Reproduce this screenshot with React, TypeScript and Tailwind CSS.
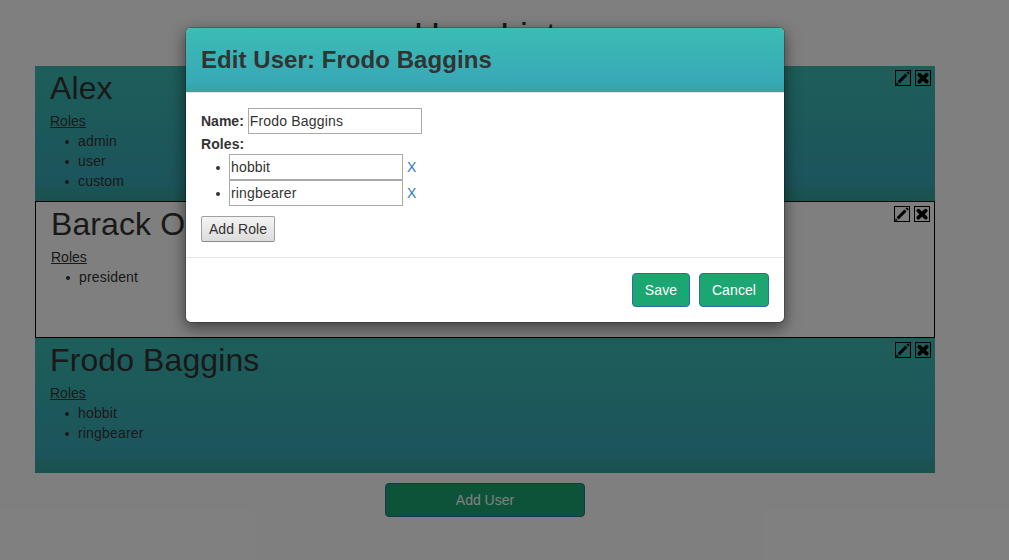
import { useState } from "react";

type User = { name: string; roles: string[]; outlined?: boolean };

const users: User[] = [
  { name: "Alex", roles: ["admin", "user", "custom"] },
  { name: "Barack Obama", roles: ["president"], outlined: true },
  { name: "Frodo Baggins", roles: ["hobbit", "ringbearer"] },
];

function PencilIcon() {
  return (
    <svg viewBox="0 0 16 16" className="block size-4" aria-label="Edit">
      <rect x=".5" y=".5" width="15" height="15" fill="none" stroke="#000" />
      <path d="M1 15 1.8 12.2 3.8 14.2Z" fill="#000" />
      <path d="M2.6 11.3 10.4 3.5 12.5 5.6 4.7 13.4Z" fill="#000" />
      <path d="M11.5 2.5 12.8 1.2 14.8 3.2 13.5 4.5Z" fill="#000" />
    </svg>
  );
}

function CrossIcon() {
  return (
    <svg viewBox="0 0 16 16" className="block size-4" aria-label="Delete">
      <rect x=".5" y=".5" width="15" height="15" fill="none" stroke="#000" />
      <path
        d="M4.3 4.7 11.7 11.6M11.7 4.7 4.3 11.6"
        stroke="#000"
        strokeWidth="3.8"
        strokeLinecap="round"
      />
    </svg>
  );
}

function UserRow({ user }: { user: User }) {
  return (
    <section
      className={
        user.outlined
          ? "flex h-[137px] justify-between border border-black bg-white pl-[15px] pr-[4px]"
          : "flex h-[135px] justify-between bg-[linear-gradient(#3bbcb4,#38a9b7_85%,#35a49c)] pl-[15px] pr-[4px]"
      }
    >
      <div>
        <h2 className="mt-[5px] mb-[5px] text-[32px] leading-[35px] tracking-[0.1px]">{user.name}</h2>
        <div className="underline">Roles</div>
        <ul className="pl-[15px]">
          {user.roles.map((role) => (
            <li
              key={role}
              className="flex tracking-[0.17px] before:mt-[9px] before:mr-[9px] before:size-[4px] before:rounded-full before:bg-current"
            >
              {role}
            </li>
          ))}
        </ul>
      </div>
      <div className="flex gap-1 pt-1">
        <PencilIcon />
        <CrossIcon />
      </div>
    </section>
  );
}

function EditDialog() {
  const [name, setName] = useState("Frodo Baggins");
  const [roles, setRoles] = useState(["hobbit", "ringbearer"]);
  const field =
    "block h-[26px] w-[174px] border border-[#a9a9a9] bg-white px-px tracking-[0.17px] outline-none";
  const action = "h-[34px] rounded-[4px] border border-[#2e6da4] bg-[#1ba672] text-white";

  return (
    <div className="w-[600px] overflow-hidden rounded-[6px] border border-black/20 bg-white bg-clip-padding shadow-[0_5px_15px_rgba(0,0,0,0.5)]">
      <header className="h-[65px] border-b border-[#e5e5e5] bg-[linear-gradient(#3bbcb4,#38a9b7_85%,#35a49c)] bg-clip-padding p-[15px]">
        <h2 className="text-[24px] font-bold leading-[34px] tracking-[0.06px]">Edit User: {name}</h2>
      </header>
      <div className="h-[164px] p-[15px]">
        <label className="flex items-center gap-1">
          <b>Name:</b>
          <input className={field} value={name} onChange={(e) => setName(e.target.value)} />
        </label>
        <b className="block tracking-[0.1px]">Roles:</b>
        <ul className="mb-[10px] pl-[15px]">
          {roles.map((role, i) => (
            <li
              key={i}
              className="flex h-[26px] before:mt-[12px] before:mr-[9px] before:size-[4px] before:rounded-full before:bg-current"
            >
              <div className="flex items-center gap-1">
                <input
                  className={field}
                  value={role}
                  onChange={(e) => setRoles(roles.map((r, j) => (j === i ? e.target.value : r)))}
                />
                <button className="text-[#337ab7]" onClick={() => setRoles(roles.filter((_, j) => j !== i))}>
                  X
                </button>
              </div>
            </li>
          ))}
        </ul>
        <button
          className="block h-[26px] w-[74px] rounded-[2px] border border-[#a0a0a0] border-b-[#8c8c8c] bg-[linear-gradient(#f4f4f4,#dcdcdc)] tracking-[0.08px]"
          onClick={() => setRoles([...roles, ""])}
        >
          Add Role
        </button>
      </div>
      <footer className="flex h-[65px] justify-end gap-[9px] border-t border-[#e5e5e5] p-[15px]">
        <button className={`${action} w-[58px] tracking-[0.1px]`}>Save</button>
        <button className={`${action} w-[70px] tracking-[0.1px]`}>Cancel</button>
      </footer>
    </div>
  );
}

export default function App() {
  return (
    <div className="relative h-[560px] overflow-hidden bg-white font-['Liberation_Sans',Arial,sans-serif] text-[14px] leading-[20px] text-[#333]">
      <main className="ml-[35px] w-[900px] pt-[17px]">
        <h1 className="mb-[9px] text-center text-[36px] leading-[40px]">User List</h1>
        {users.map((user) => (
          <UserRow key={user.name} user={user} />
        ))}
        <button className="mx-auto mt-[10px] block h-[34px] w-[200px] rounded-[4px] border border-[#2e6da4] bg-[#1ba672] text-white">
          Add User
        </button>
      </main>
      <div className="absolute inset-0 bg-black/50 pl-[185px] pt-[27px]">
        <EditDialog />
      </div>
    </div>
  );
}
